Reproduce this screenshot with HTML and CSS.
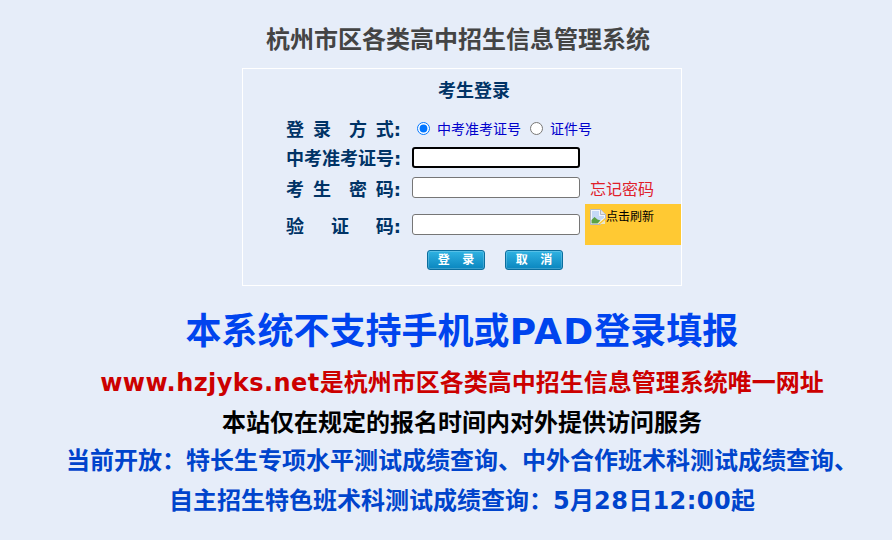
FILE: index.html
```html
<!DOCTYPE html>
<html lang="zh-CN">
<head>
  <meta charset="UTF-8">
  <title>杭州市区各类高中招生信息管理系统</title>
  <link rel="stylesheet" href="styles.css">
</head>
<body>
  <div class="page">
    <h1 class="site-title">杭州市区各类高中招生信息管理系统</h1>

    <div class="login-box">
      <div class="login-title">考生登录</div>
      <div class="form">
        <div class="row row-mode">
          <label class="field-label">登&nbsp;录&nbsp;&nbsp;方&nbsp;式:</label>
          <div class="mode-options">
            <input type="radio" name="mode" checked>
            <span class="mode-text">中考准考证号</span>
            <input type="radio" name="mode">
            <span class="mode-text">证件号</span>
          </div>
        </div>
        <div class="row row-id">
          <label class="field-label">中考准考证号:</label>
          <input type="text" class="text-input focused">
        </div>
        <div class="row row-pass">
          <label class="field-label">考&nbsp;生&nbsp;&nbsp;密&nbsp;码:</label>
          <input type="password" class="text-input">
          <a class="forgot">忘记密码</a>
        </div>
        <div class="row row-code">
          <label class="field-label">验&nbsp;&nbsp;&nbsp;证&nbsp;&nbsp;&nbsp;码:</label>
          <input type="text" class="text-input">
          <div class="captcha">
            <svg class="broken-img" width="16" height="16" viewBox="0 0 16 16">
              <path d="M.5.5h10l5 5v5l-5 5H.5z" fill="#f4f6fa" stroke="#b4b8c0"/>
              <path d="M10.5.5v5h5" fill="#e2e5ea" stroke="#b4b8c0"/>
              <path d="M2 2h7v5h5v2l-5 3H2z" fill="#c5d9f6"/>
              <path d="M1.5 14.500V11l3-3 3 2.500 3 1-3 3z" fill="#5aa244"/>
              <path d="M8 15l7-6v6z" fill="#ffc933"/>
              <path d="M10 15l5-4v4z" fill="#e9e6c9"/>
            </svg><span>点击刷新</span>
          </div>
        </div>
        <div class="buttons">
          <button class="btn">登&nbsp;&nbsp;&nbsp;录</button>
          <button class="btn">取&nbsp;&nbsp;&nbsp;消</button>
        </div>
      </div>
    </div>

    <div class="notice-big">本系统不支持手机或<span class="latin-big">PAD</span>登录填报</div>
    <div class="notice notice-red"><span class="latin">www.hzjyks.net</span>是杭州市区各类高中招生信息管理系统唯一网址</div>
    <div class="notice notice-black">本站仅在规定的报名时间内对外提供访问服务</div>
    <div class="notice notice-blue">当前开放：特长生专项水平测试成绩查询、中外合作班术科测试成绩查询、</div>
    <div class="notice notice-blue notice-last">自主招生特色班术科测试成绩查询：<span class="latin">5</span>月<span class="latin">28</span>日<span class="latin">12:00</span>起</div>
  </div>
</body>
</html>
```

FILE: styles.css
```css
html, body {
  margin: 0;
  padding: 0;
}
body {
  background-color: #e6edf9;
  font-family: "DejaVu Sans", "Noto Sans CJK SC", sans-serif;
  overflow: hidden;
}
.page {
  width: 924px;
  padding-top: 25px;
}
.site-title {
  margin: 0 8px 0 0;
  font-size: 24px;
  line-height: 30px;
  font-weight: bold;
  color: #444;
  text-align: center;
}
.login-box {
  box-sizing: border-box;
  width: 440px;
  height: 218px;
  margin: 13px auto 0;
  border: 1px solid #fff;
  padding-top: 10px;
}
.login-title {
  font-size: 18px;
  line-height: 24px;
  font-weight: bold;
  color: #003366;
  text-align: center;
  margin-left: 24px;
}
.form {
  padding: 13px 0 0 43px;
}
.row {
  display: flex;
  align-items: center;
}
.row-mode {
  height: 24px;
}
.row-id {
  height: 34px;
}
.row-pass {
  height: 27px;
}
.row-code {
  height: 47px;
}
.field-label {
  width: 115px;
  margin-right: 11px;
  font-size: 18px;
  word-spacing: 2.7px;
  font-weight: bold;
  color: #003366;
  white-space: nowrap;
}
.mode-options {
  display: flex;
  align-items: center;
  font-size: 13px;
}
.mode-options input {
  margin: 0 7px 0 5px;
}
.mode-text {
  font-size: 14px;
  color: #0000cc;
  margin-right: 4px;
}
.text-input {
  box-sizing: border-box;
  width: 168px;
  height: 21px;
  padding: 1px 2px;
  border: 1px solid #767676;
  border-radius: 3px;
  background: #fff;
  outline: none;
}
.text-input.focused {
  border: 2px solid #000;
}
.forgot {
  margin-left: 10px;
  font-size: 16px;
  color: #e0202a;
}
.captcha {
  box-sizing: border-box;
  width: 96px;
  height: 41px;
  margin-left: 5px;
  padding: 5px 0 0 5px;
  background: #ffc933;
  font-size: 12px;
  line-height: 16px;
  color: #000;
  display: flex;
  align-items: flex-start;
}
.buttons {
  display: flex;
  gap: 20px;
  padding: 2px 0 0 141px;
}
.btn {
  box-sizing: border-box;
  width: 58px;
  height: 20px;
  padding: 0;
  border: 1px solid #0b6e9e;
  border-radius: 3px;
  background: linear-gradient(#2fb2e2, #0a86bf);
  box-shadow: inset 0 0 0 1px rgba(255,255,255,0.2);
  color: #fff;
  font-family: inherit;
  font-size: 12px;
  font-weight: bold;
  line-height: 18px;
}
.notice-big {
  margin-top: 22px;
  font-size: 36px;
  line-height: 48px;
  font-weight: bold;
  color: #0044ee;
  text-align: center;
  white-space: nowrap;
}
.latin-big {
  letter-spacing: 1.3px;
}
.latin {
  letter-spacing: 0.45px;
}
.notice {
  font-size: 24px;
  font-weight: bold;
  text-align: center;
  white-space: nowrap;
  line-height: 38px;
}
.notice-red {
  color: #cc0000;
  margin-top: 8px;
}
.notice-black {
  color: #000;
  margin-top: 2px;
}
.notice-blue {
  color: #0044cc;
}
.notice-last {
  margin-top: 2px;
}
```
